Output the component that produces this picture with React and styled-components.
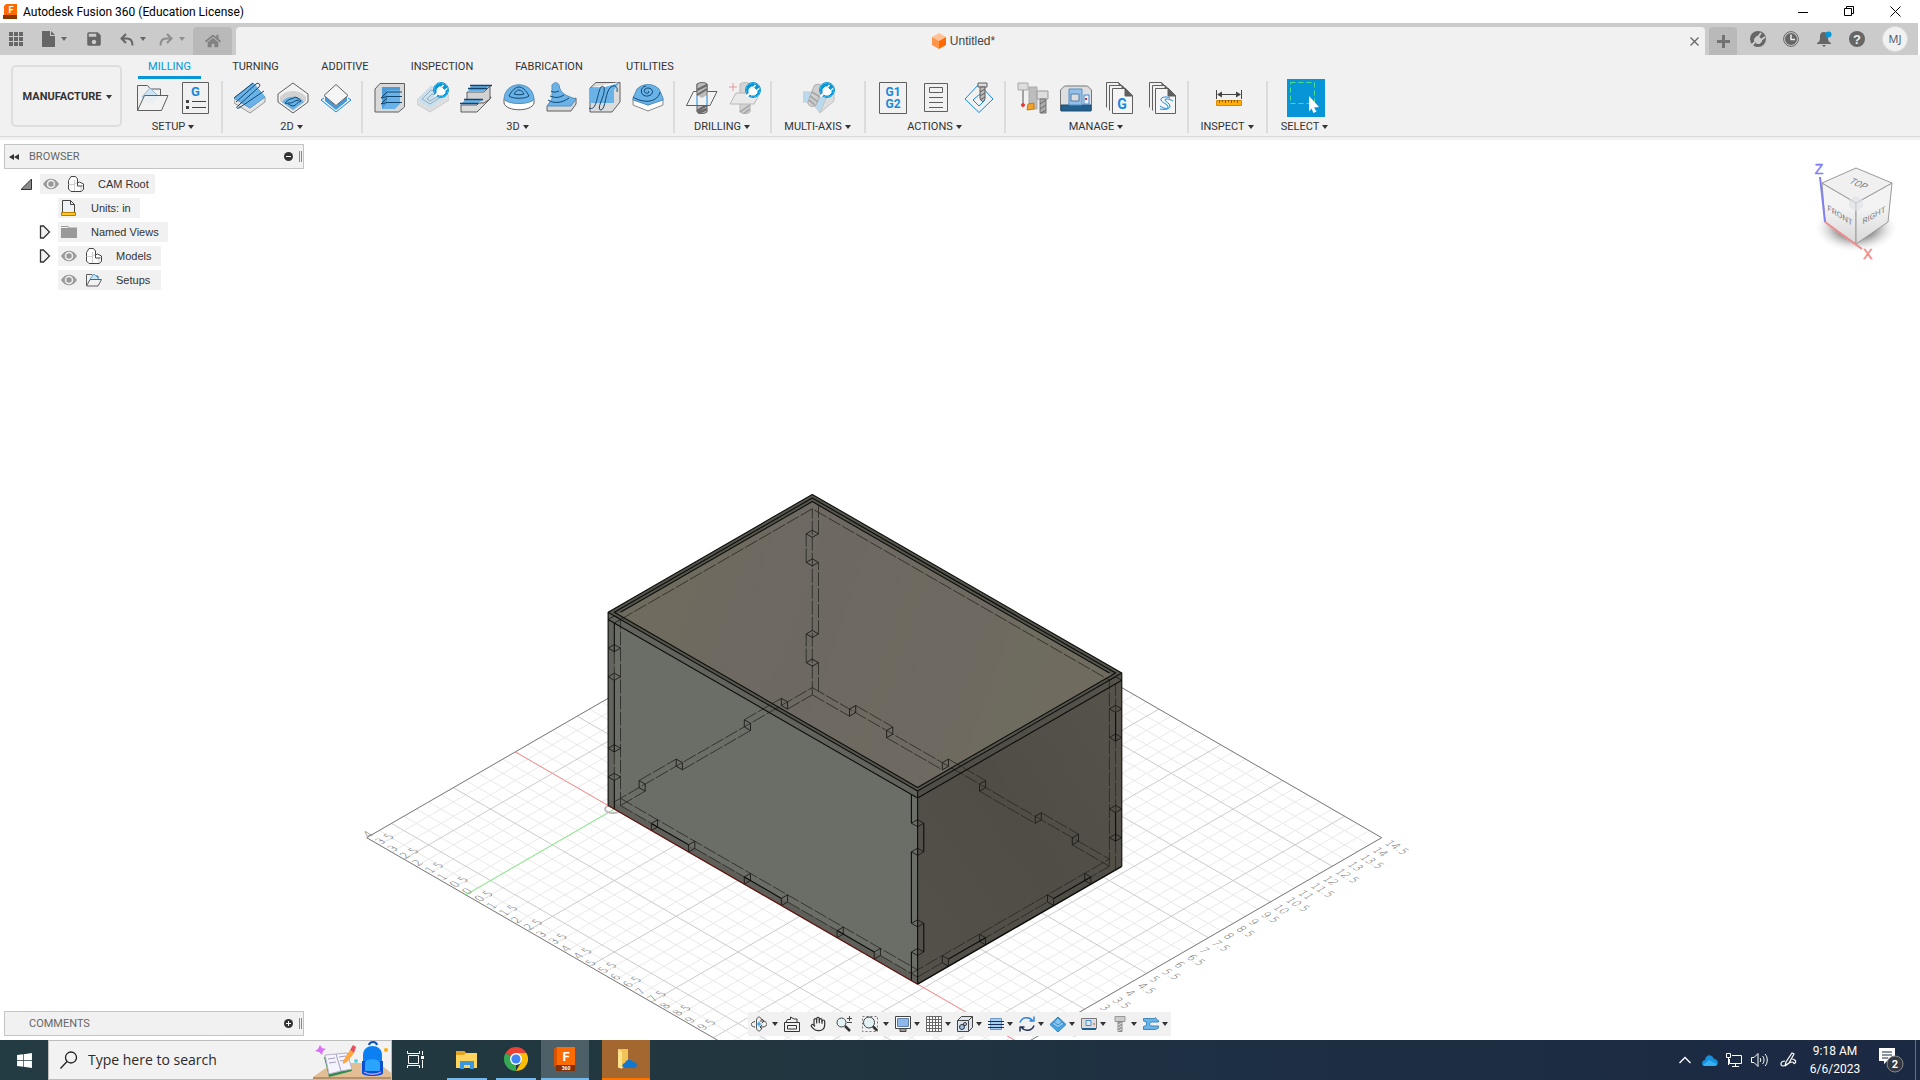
import React from 'react';
import styled, { createGlobalStyle } from 'styled-components';
import { FaHome, FaWindows } from 'react-icons/fa';
import { MdSave } from 'react-icons/md';
import { Hand } from 'lucide-react';

const GlobalStyle = createGlobalStyle`
  * { box-sizing: border-box; }
  body {
    margin: 0;
    font-family: 'Liberation Sans', Arial, sans-serif;
    font-size: 11px;
    color: #333;
    background: #fff;
    overflow: hidden;
  }
  button {
    font: inherit;
    color: inherit;
    background: none;
    border: 0;
    padding: 0;
  }
  svg { display: block; flex: none; }
`

//Shell
const Page = styled.div`
  display: flex;
  flex-direction: column;
  min-height: 100vh;
`

const TitleBar = styled.header`
  display: flex;
  align-items: center;
  height: 23px;
  padding: 0 2px 0 3px;
`

const Title = styled.h1`
  flex: 1;
  margin: 0 0 0 5px;
  font: 400 12px/20px Roboto, 'Open Sans', sans-serif;
  color: #000;
`

const WindowButton = styled.button`
  display: grid;
  place-items: center;
  width: 46px;
  height: 20px;
`

//Tab strip
const TabStrip = styled.div`
  display: flex;
  align-items: stretch;
  height: 32px;
  padding-top: 4px;
  margin-right: 2px;
  background: #cbcbcb;
  color: #666;
`

const QuickTools = styled.div`
  display: flex;
  align-items: center;
  width: 193px;
  padding: 0 0 4px 9px;
`

const QuickButton = styled.button`
  display: flex;
  align-items: center;
  justify-content: flex-start;
  gap: 6px;
  width: ${props => props.$width}px;
  opacity: ${props => props.$dim ? 0.6 : 1};
`

const HomeTab = styled.button`
  display: grid;
  place-items: center;
  width: 39px;
  margin-right: 4px;
  border-radius: 4px 4px 0 0;
  background: #b9b9b9;
  color: #828282;
`

const DocumentTab = styled.div`
  flex: 1;
  display: flex;
  align-items: center;
  border-radius: 4px 4px 0 0;
  background: #f1f1f1;
`

const DocumentName = styled.span`
  flex: 1;
  display: flex;
  align-items: center;
  justify-content: center;
  gap: 4px;
  padding-left: 8px;
  font-size: 12px;
  color: #444;
`

const CloseTab = styled.button`
  display: grid;
  place-items: center;
  width: 22px;
  height: 28px;
`

const NewTab = styled(HomeTab)`
  width: 28px;
  margin: 0 4px;
`

const AccountTools = styled.div`
  display: flex;
  align-items: center;
  padding-bottom: 4px;
`

const AccountButton = styled.button`
  display: grid;
  place-items: center;
  width: 33px;
  height: 28px;
`

const Avatar = styled.button`
  width: 26px;
  height: 26px;
  margin: 0 10px 0 9px;
  border: 1px solid #dcdcdc;
  border-radius: 50%;
  background: #f1f1f1;
  font: 400 11px/22px 'Open Sans', sans-serif;
  color: #45526b;
`

//Ribbon
const Ribbon = styled.section`
  display: flex;
  height: 85px;
  background: #f1f1f1;
  border-bottom: 3px solid #f1f1f1;
  box-shadow: inset 0 -1px #d9d9d9;
`

const WorkspaceButton = styled.button`
  display: flex;
  align-items: center;
  justify-content: center;
  gap: 5px;
  width: 111px;
  height: 62px;
  margin: 10px 4px 0 11px;
  padding: 2px 0 0 2px;
  border: 2px solid #dedede;
  border-radius: 5px;
  font: 700 11px/14px Roboto, sans-serif;
`

const RibbonMain = styled.div`
  font: 400 11px/14px Roboto, sans-serif;
`

const RibbonTabs = styled.nav`
  display: flex;
  height: 25px;
  padding-left: 12px;
`

const RibbonTab = styled.button`
  width: ${props => props.$width}px;
  height: 24px;
  margin-right: 20px;
  padding-top: 2px;
  border-bottom: 3px solid ${props => props.$active ? '#0696d7' : 'transparent'};
  color: ${props => props.$active ? '#0696d7' : '#333'};
`

const Groups = styled.div`
  display: flex;
`

const Group = styled.div`
  display: flex;
  flex-direction: column;
  align-items: center;
  width: ${props => props.$width}px;
  height: 52px;
  margin-top: 1px;
  border-right: 2px solid #dcdcdc;
  &:last-child { border-color: transparent; }
`

const GroupIcons = styled.div`
  flex: none;
  display: flex;
  height: 34px;
  padding-left: 2px;
  align-items: center;
`

const ToolButton = styled.button`
  display: grid;
  place-items: center;
  width: 43px;
  height: 34px;
`

const SelectTool = styled(ToolButton)`
  width: 38px;
  height: 38px;
`

const SelectFill = styled.span`
  display: grid;
  place-items: center;
  width: 38px;
  height: 38px;
  background: #0696d7;
`

const GroupLabel = styled.button`
  flex: none;
  display: flex;
  align-items: center;
  gap: 3px;
  height: 14px;
  margin: 5px 1px 0 0;
  white-space: nowrap;
`

const Caret = styled.span`
  flex: none;
  margin-left: ${props => props.$gap || 0}px;
  border: 3px solid transparent;
  border-top: 4px solid ${props => props.$color || '#333'};
  border-bottom: 0;
`

//Viewport, every overlay shares one grid cell with the scene
const Viewport = styled.main`
  flex: 1;
  display: grid;
  grid-template: minmax(0, 1fr) / minmax(0, 1fr);
  overflow: hidden;
  & > * { grid-area: 1 / 1; }
`

const Scene = styled.svg`
  width: 100%;
  height: 0;
  min-height: 100%;
`

const Side = styled.aside`
  display: flex;
  flex-direction: column;
  justify-content: space-between;
  justify-self: start;
  width: 300px;
  margin: 4px 0 4px 4px;
`

const PanelBar = styled.div`
  display: flex;
  align-items: center;
  height: 25px;
  padding: 0 1px 0 4px;
  border: 1px solid #c4c4c4;
  background: #f1f1f1;
  font: 400 11px/14px Roboto, sans-serif;
  color: #666;
`

const PanelTitle = styled.span`
  flex: 1;
  padding-left: 4px;
`

const PanelIcon = styled.button`
  display: grid;
  place-items: center;
  width: 10px;
  height: 20px;
  margin-right: 6px;
`

const Grip = styled.span`
  width: 3px;
  height: 11px;
  border: solid #888;
  border-width: 0 1px;
`

const Tree = styled.ul`
  list-style: none;
  margin: 3px 0 0;
  padding: 0;
`

const TreeRow = styled.li`
  display: flex;
  align-items: center;
  height: 24px;
  padding-left: ${props => props.$indent}px;
`

const Toggle = styled.button`
  display: flex;
  width: 19px;
`

const NodePill = styled.span`
  display: flex;
  align-items: center;
  gap: 9px;
  width: ${props => props.$width}px;
  height: 20px;
  padding-left: 3px;
  background: #f1f1f1;
`

const NodeLabel = styled.span`
  padding-left: 5px;
  white-space: nowrap;
`

const CubeSvg = styled.svg`
  justify-self: end;
  width: 110px;
  height: 120px;
  margin: 12px 10px 0 0;
`

const NavBar = styled.div`
  align-self: end;
  justify-self: center;
  display: flex;
  align-items: center;
  height: 24px;
  margin: 0 2px 4px 0;
  background: #f1f1f1;
`

const NavButton = styled.button`
  display: flex;
  align-items: center;
  width: ${props => props.$width}px;
  height: 24px;
`

const NavIcon = styled.span`
  display: grid;
  place-items: center;
  width: 22px;
`

//Windows taskbar
const Taskbar = styled.footer`
  display: flex;
  height: 40px;
  background: linear-gradient(90deg, #233b42, #21363f 40%, #1e3042 60%, #1b2942);
  color: #fff;
  font: 400 12px/18px Roboto, 'Open Sans', sans-serif;
`

const StartButton = styled.button`
  display: grid;
  place-items: center;
  width: 48px;
`

const SearchBox = styled.label`
  display: flex;
  align-items: center;
  width: 344px;
  padding-left: 11px;
  background: #f2f2f2;
  border: 1px solid #bdbdbd;
`

const SearchInput = styled.input`
  flex: 1;
  min-width: 0;
  margin-left: 10px;
  padding: 0;
  border: 0;
  background: none;
  font: 400 14px/20px 'Open Sans', sans-serif;
  &::placeholder { color: #2b2b2b; opacity: 1; }
`

const TaskButton = styled.button`
  display: grid;
  place-items: center;
  width: ${props => props.$width}px;
  margin-right: ${props => props.$gap || 0}px;
  background: ${props => props.$fill || 'transparent'};
  border-bottom: 2px solid ${props => props.$line || 'transparent'};
`

const Tray = styled.div`
  display: flex;
  align-items: center;
  margin-left: auto;
`

const TrayButton = styled.button`
  display: grid;
  place-items: center;
  width: ${props => props.$width || 25}px;
  height: 40px;
`

const Clock = styled.time`
  width: 62px;
  text-align: center;
`

const ShowDesktop = styled.button`
  width: 5px;
  height: 40px;
  border-left: 1px solid #66707f;
`

//Shared icon wrapper
const Icon = ({ size = 32, children }) =>
  <svg width={size} height={size} viewBox={`0 0 ${size} ${size}`} fill="none" stroke="#5f5f5f" strokeLinejoin="round" aria-hidden="true">
    {children}
  </svg>

const BLUE = '#6ab3e8';
const NAVY = '#10466f';

//White plug on a blue disc, marks extension tools
const Plug = () => (
  <g>
    <circle cx="24" cy="8" r="7.500" fill="#fff" stroke="#0696d7" />
    <circle cx="24" cy="8" r="7" fill="#0696d7" stroke="none" />
    <path d="M17.500 14.500l3-3" stroke="#fff" strokeWidth="2" />
    <path d="M20 7.500l2-2.500h2l4 4v2l-2.500 2h-3.500l-2-2z" fill="#fff" stroke="#fff" />
    <path d="M24 6l2.500-3M27 9l3-2.500" stroke="#fff" strokeWidth="1.500" />
  </g>
)

const FolderDiamond = () => (
  <Icon>
    <path d="M.5 28.500V3.500h10l3 3.500h10v7" />
    <path d="M4.500 16L13 6l8.500 9.500v1L13 22z" fill="#cfe5f3" stroke="none" />
    <path d="M5 15l8-9 8 8" stroke="#91b6cc" />
    <path d="M.5 28.500l7-15h23.500l-6.500 15z" fill="#f1f1f1" fillOpacity=".75" />
  </Icon>
)

const SetupSheet = () => (
  <Icon>
    <path d="M2.500.5h26v31h-26z" />
    <text x="15.500" y="14" textAnchor="middle" fontSize="13" fontWeight="700" fontFamily="Roboto, sans-serif" fill="#1489dd" stroke="none">G</text>
    <path d="M6 18h3v3H6zM6 24h3v3H6z" fill="#444" stroke="none" />
    <path d="M12 19.500h14M12 25.500h14" stroke="#444" />
  </Icon>
)

const FaceMill = () => (
  <Icon>
    <path d="M0 16v5l16 10 15-11v-5L16 26z" fill="#e4e4e4" stroke="#999" />
    <path d="M0 16L19 1l12 14-15 11z" fill={BLUE} stroke="#5aa0d4" />
    <path d="M0 16L19 1M2 20L22 2c3-2 5 1 3 3L5 23c-3 2-3 4 0 3L30 9" stroke={NAVY} />
  </Icon>
)

const Pocket2D = () => (
  <Icon>
    <path d="M16 1l15 11v8L16 31 1 20v-8z" fill="#f3f3f3" />
    <path d="M3 15c6-8 20-8 26 0v4L16 29 3 19z" fill="#d2d2d2" stroke="none" />
    <path d="M5 20c5-7 17-7 22 0L16 28z" fill={BLUE} stroke="none" />
    <path d="M8 21c6-6 7-3 10-6 3 1 5 2 6 4-4 1-5 5-8 5s-4-3-8-3zM11 21c5 1 6-3 11-3" stroke={NAVY} />
  </Icon>
)

const Contour2D = () => (
  <Icon>
    <path d="M4 16l-3 2 15 12 15-12-3-2" stroke="#1489dd" />
    <path d="M5 14v5l11 9 11-9v-5L16 24z" fill="#4698d6" stroke="none" />
    <path d="M16 2.500l12 11-12 10-12-10z" fill="#f5f5f5" />
  </Icon>
)

const Adaptive = () => (
  <Icon>
    <path d="M1 7l5-5.500h24.500V25l-6 5H1z" fill="#d9d9d9" />
    <path d="M8 5h18v17l-5 5H8z" fill={BLUE} stroke="none" />
    <path d="M8 5h18v3H13v13l-5 6z" fill="#4c9bd6" stroke="none" />
    <path d="M13 10H28M13 10l-6 6 6-1.500H28M13 16l-6 6 6-1.500H28" stroke={NAVY} />
  </Icon>
)

const PocketGhost = () => (
  <Icon>
    <path d="M0 18L14 4l18 9v5L13 30 0 22z" fill="#dedede" stroke="#ccc" />
    <path d="M0 18L14 4l18 9-19 13z" fill="#c9e0ef" stroke="none" />
    <path d="M5 17l9-9 13 5-14 9zM10 17l5-5 6 2-8 5z" stroke="#93adbd" />
    <Plug />
  </Icon>
)

const Steps = () => (
  <Icon>
    <path d="M1 23h16l8-8h6l-1 2-13 13H1z" fill="#dcdcdc" />
    <path d="M7 10h17l6-6v13l-6 4H7z" fill="#d2d2d2" />
    <path d="M8 9l4-6h18l-6 6zM1 22l5-5h17l-6 5z" fill={BLUE} stroke="none" />
    <path d="M10 3.500h22M8 6.500h19M4 17.500h19M0 21.500h18" stroke={NAVY} strokeWidth="1.500" />
  </Icon>
)

const Dome = () => (
  <Icon>
    <path d="M1 17v4c2 9 28 9 30 0v-4z" fill="#fff" />
    <path d="M1 17C2-2 30-2 31 17c-3 6-27 6-30 0z" fill={BLUE} stroke="#5590ba" />
    <path d="M6 14c3-6 7-9 10-9s7 3 10 9c-4 3-16 3-20 0zM11 12c2-3 3-4 5-4s4 2 5 4c-2 1-8 1-10 0z" stroke={NAVY} />
  </Icon>
)

const Spire = () => (
  <Icon>
    <path d="M1 24l5-5 10 3 14-6v6l-5 7H1z" fill="#d8d8d8" />
    <path d="M6 3c2-3 6-3 7 0 1 9 8 11 17 14l-5 7H1l5-7z" fill={BLUE} stroke="#5590ba" />
    <path d="M5 9c3 2 5 1 8 0M4 14c5 2 9 2 14-1M2 18c6 4 14 3 21-2" stroke={NAVY} />
  </Icon>
)

const Scallop = () => (
  <Icon>
    <path d="M1 6l6-5.500h24V20l-8 10H1z" fill="#dcdcdc" />
    <path d="M1 6h22l7-6" fill="#fff" />
    <path d="M1 6h11l18-5-5 7v13H1z" fill={BLUE} stroke="none" />
    <path d="M0 26c8 4 8-15 12-21 4-3 4 4 2 9-2 6-6 14-2 14 5-1 4-19 10-23 4-3 7 0 6 5" stroke={NAVY} />
  </Icon>
)

const Spiral = () => (
  <Icon>
    <path d="M1 17v6l15 6 15-6v-6l-15 6z" fill="#fff" stroke="#888" />
    <path d="M1 16L5 7c6-6 16-6 22 0l4 9v2l-15 5-15-5z" fill={BLUE} stroke="#5590ba" />
    <path d="M16 9c2 1 0 3-2 2-3-1-2-5 2-5 6 0 6 7 0 8-8 1-9-9-2-10M1 15c4 3 12 5 17 4s9-4 10-9" stroke={NAVY} />
  </Icon>
)

const Drill = () => (
  <Icon>
    <path d="M11 2c3-2 8-2 10 0v28c-2 2-8 2-10 0z" fill="#bcbcbc" />
    <path d="M11 29l10-6M12 31l9-4" stroke="#6a6a6a" strokeWidth="2.500" />
    <path d="M7.500 9.500H31l-7 14H.5z" fill="#f3f3f3" />
    <path d="M11 3h10v10l-5 3-5-3z" fill="#bbb" stroke="none" />
    <path d="M11 8l10-5M11 13l10-6" stroke="#6a6a6a" strokeWidth="2" />
    <path d="M11 2v12M21 2v12" stroke="#6a6a6a" />
    <path d="M11 14v9M21 14v9" stroke="#1489dd" />
  </Icon>
)

const DrillGhost = () => (
  <Icon>
    <path d="M11 2c3-2 8-2 10 0v28c-2 2-8 2-10 0z" fill="#d4d4d4" stroke="#b8b8b8" />
    <path d="M11 30l10-7M14 32l7-5" stroke="#aaa" strokeWidth="2" />
    <path d="M7 11h24l-6 11H1z" fill="#e9e9e9" stroke="#b8b8b8" />
    <path d="M4 1v8M0 5h8" stroke="#e79a9a" />
    <Plug />
  </Icon>
)

const MultiAxis = () => (
  <Icon>
    <path d="M0 10h10v10H0zM17 31L9 21 28 9l3 8z" fill="#b9d9ee" stroke="#c5cdd2" />
    <path d="M24 14l7-3v8L17 31z" fill="#ddd" stroke="#c4c4c4" />
    <path d="M11 4c2-3 8-2 9 2l-7 17c-3 3-9 1-8-3z" fill="#d0d0d0" stroke="#adadad" />
    <path d="M7 14l8 6M9 10l8 5M6 18l6 5" stroke="#a8a8a8" strokeWidth="2" />
    <Plug />
  </Icon>
)

const GCode = () => (
  <Icon>
    <path d="M2.500.5h27v31h-27z" />
    <g stroke="none" fill="#1489dd" fontSize="12" fontWeight="700" fontFamily="Roboto, sans-serif" textAnchor="middle">
      <text x="16" y="14">G1</text>
      <text x="16" y="26">G2</text>
    </g>
  </Icon>
)

const SetupReport = () => (
  <Icon>
    <path d="M4.500 1.500h23v28h-23zM9.500 5.500h13v5h-13zM9 15.500h14M9 20.500h14M9 25.500h14" />
  </Icon>
)

const Simulate = () => (
  <Icon>
    <path d="M16 2l14 15-14 13.500L2 17zM17 12l-7 6 6 6 6-6" stroke="#1489dd" />
    <path d="M15 1h9v4h-9z" fill="#ddd" />
    <path d="M17 5h5v12l-2 3-3-3z" fill="#bbb" />
    <path d="M17 10l5-3M17 14l5-3M17 18l5-3" />
  </Icon>
)

const ToolLibrary = () => (
  <Icon>
    <path d="M1 1h10v7H1z" fill="#ddd" stroke="#aaa" />
    <path d="M6 8v14" stroke="#888" strokeWidth="1.500" />
    <circle cx="6" cy="23" r="1.500" fill="#e33" stroke="#e33" />
    <path d="M12 5h8v22h-8z" fill="#bdbdbd" stroke="#aaa" />
    <path d="M11 22l6-1v6l-7 1z" fill="#f2a32b" stroke="#c77d0b" />
    <path d="M20 9h11v8H20z" fill="#ddd" stroke="#999" />
    <path d="M23 17h6v14h-6z" fill="#aaa" stroke="#777" />
    <path d="M23 22l6-4M23 27l6-4M24 31l5-3" stroke="#666" />
  </Icon>
)

const Machine = () => (
  <Icon>
    <path d="M.5 28.500V8l4-4h23l4 4v20.500z" fill="#dedede" stroke="#777" />
    <path d="M1 23h30v6H1z" fill="#23608e" stroke="#1c5079" />
    <path d="M9 7h13v16H9z" fill="#93bfe8" stroke="#5590c8" />
    <path d="M11 12h8v7h-8z" fill="#ddd" stroke="#4f7faa" />
    <path d="M24 13h5v9h-5z" fill="#e8f1fb" stroke="#3c88cf" />
    <path d="M26 16v2" stroke="#d33" strokeWidth="2" />
  </Icon>
)

const Stack = ({ children }) => (
  <Icon>
    <path d="M3.500 25.500v-25h12l3 3M6.500 28.500v-25h12l3 3" />
    <path d="M9.500 6.500h13l7 7v18h-20z" fill="#f5f5f5" />
    <path d="M15.500.5l3 3h-2zM19 3.500l3 3h-3zM22 6v8h7.500z" fill="#5f5f5f" />
    {children}
  </Icon>
)

const PostLibrary = () => (
  <Stack>
    <text x="19" y="27" textAnchor="middle" fontSize="14" fontWeight="700" fontFamily="Roboto, sans-serif" fill="#1489dd" stroke="none">G</text>
  </Stack>
)

const TemplateLibrary = () => (
  <Stack>
    <path d="M24 16c-3-2-10-1-9 2s7 4 7 7-5 1-8-1M27 19c-3-2-8-3-8-1s5 3 5 6-4 4-10 3" stroke="#1489dd" />
  </Stack>
)

const Measure = () => (
  <Icon>
    <path d="M3.500 8v9M28.500 8v9M5 12.500h22" stroke="#444" />
    <path d="M4 12.500l5-3v6zM28 12.500l-5-3v6z" fill="#444" stroke="none" />
    <path d="M3.500 18.500h25v5h-25z" fill="#ffac0a" stroke="#d58b00" />
    <path d="M6.500 18v3M9.500 18v2M12.500 18v3M15.500 18v2M18.500 18v3M21.500 18v2M24.500 18v3" stroke="#8a5a00" />
  </Icon>
)

const SelectArrow = () => (
  <SelectFill>
    <Icon>
      <path d="M.5.5h24v21H.5z" stroke="#4fe08c" strokeDasharray="5 3" />
      <path d="M19 14l10 11-5 .5 2.500 4-3 1.500-2-4.500-2.500 3z" fill="#fff" stroke="none" />
    </Icon>
  </SelectFill>
)

const ribbonTabs = [
  { label: 'MILLING', width: 63, active: true },
  { label: 'TURNING', width: 69 },
  { label: 'ADDITIVE', width: 70 },
  { label: 'INSPECTION', width: 84 },
  { label: 'FABRICATION', width: 90 },
  { label: 'UTILITIES', width: 72 },
];

const groups = [
  { label: 'SETUP', width: 97, icons: [FolderDiamond, SetupSheet] },
  { label: '2D', width: 140, icons: [FaceMill, Pocket2D, Contour2D] },
  { label: '3D', width: 312, icons: [Adaptive, PocketGhost, Steps, Dome, Spire, Scallop, Spiral] },
  { label: 'DRILLING', width: 97, icons: [Drill, DrillGhost] },
  { label: 'MULTI-AXIS', width: 94, icons: [MultiAxis] },
  { label: 'ACTIONS', width: 140, icons: [GCode, SetupReport, Simulate] },
  { label: 'MANAGE', width: 183, icons: [ToolLibrary, Machine, PostLibrary, TemplateLibrary] },
  { label: 'INSPECT', width: 79, icons: [Measure] },
  { label: 'SELECT', width: 76, icons: [SelectArrow], selected: true },
];

//Browser tree icons
const Eye = () => (
  <Icon size={16}>
    <path d="M0 8c4-7 12-7 16 0-4 7-12 7-16 0z" fill="#999" stroke="none" />
    <circle cx="8" cy="8" r="3.500" fill="#999" stroke="#f1f1f1" strokeWidth="1.500" />
  </Icon>
)

const Component = () => (
  <Icon size={16}>
    <path d="M.5 4.500L3 .5h4.500L9.500 3v4l2-1 4 2v5.500l-2.500 2H3L.5 13z" fill="#fff" stroke="#444" />
    <path d="M.5 8.500h6v6.500M6.500 4v4.500M7 8l2.500-1.500M13 10v5" stroke="#ccc" />
    <path d="M9.500 3v7h5" stroke="#444" />
  </Icon>
)

const Units = () => (
  <Icon size={16}>
    <path d="M1.500 12V.5h8l4 4V12" fill="#eef1f5" stroke="#444" />
    <path d="M9.500.5v4h4" stroke="#444" />
    <path d="M.5 12.500h14v3H.5z" fill="#ffc81f" stroke="#b57e00" />
  </Icon>
)

const FolderSolid = () => (
  <Icon size={16}>
    <path d="M0 2h7l1 1.500h8V14H0z" fill="#999" stroke="none" />
    <path d="M0 3.500h7" stroke="#f1f1f1" />
  </Icon>
)

const FolderSetup = () => (
  <Icon size={16}>
    <path d="M.5 14V2.500H6L7 4h5v3" />
    <path d="M4 7l4-5 5 5" fill="#cfe5f3" stroke="#5d9fcb" />
    <path d="M.5 14L4 7.500h11.500L12 14z" fill="#f1f1f1" />
  </Icon>
)

const treeNodes = [
  { label: 'CAM Root', indent: 17, width: 115, icons: [Eye, Component], toggle: 'open' },
  { label: 'Units: in', indent: 35, width: 82, icons: [Units] },
  { label: 'Named Views', indent: 35, width: 110, icons: [FolderSolid], toggle: 'closed' },
  { label: 'Models', indent: 35, width: 103, icons: [Eye, Component], toggle: 'closed' },
  { label: 'Setups', indent: 35, width: 103, icons: [Eye, FolderSetup] },
];

const ToggleIcon = ({ kind }) => (
  <svg width="14" height="14" viewBox="0 0 14 14" aria-hidden="true">
    {kind === 'open'
      ? <path d="M0 12.500h10.500V2z" fill="#8a8a8a" stroke="#333" />
      : <path d="M1.500 1v12h3l6-6-6-6z" fill="#f2f2f2" stroke="#333" strokeWidth="1.300" />}
  </svg>
)

//Scene projection, isometric with z up
const ORIGIN = [614.3, 809.1];
const ISO_X = 24.756;
const ISO_Y = 14.29;
const ISO_Z = 28.62;

const project = (x, y, z = 0) => [
  ORIGIN[0] + (x + y) * ISO_X,
  ORIGIN[1] + (x - y) * ISO_Y - z * ISO_Z,
];

const toPath = (points, close) =>
  'M' + points.map((p) => project(...p).map((n) => n.toFixed(1)).join(' ')).join('L') + (close ? 'Z' : '');

const GRID = { x0: -4, x1: 16.5, y0: -6, y1: 14.5 };
const steps = (from, to, by) => {
  const out = [];
  for (let v = from; v <= to + 0.001; v += by) out.push(v);
  return out;
};

const gridPath = (major) => {
  const keep = (v) => (v % 2.5 === 0) === major;
  return steps(GRID.x0, GRID.x1, 0.5).filter(keep).map((x) => toPath([[x, GRID.y0], [x, GRID.y1]])).join('')
    + steps(GRID.y0, GRID.y1, 0.5).filter(keep).map((y) => toPath([[GRID.x0, y], [GRID.x1, y]])).join('');
};

const place = (p, angle, dx, dy) => {
  const [px, py] = project(...p);
  return `translate(${px + dx} ${py + dy}) rotate(${angle}) skewX(${-angle})`;
};

const GridLabels = () => (
  <g fontFamily="DejaVu Sans, sans-serif" fontWeight="200" fontSize="10" fill="#6a6a6a">
    {steps(-4, 9.5, 0.5).map((x) => (
      <text key={`x${x}`} transform={place([x, GRID.y0], -30, 2, 0)}>{Math.abs(x)}</text>
    ))}
    {steps(1.5, 14.5, 0.5).map((y) => (
      <text key={`y${y}`} transform={place([GRID.x1, y], 30, 2, 6)}>{y}</text>
    ))}
  </g>
)

//Box model, units are inches
const X0 = -0.25, X1 = 12.25, Y0 = 0, Y1 = 8.25, H = 6.75, T = 0.25, LIP = 0.125;
const tabsZ = [[1, 2], [4.5, 5.5]];
const gapsZ = [[0, 1], [2, 4.5], [5.5, 6.5]];
const tabsX = [[1.5, 3], [5.25, 6.75], [9, 10.5]];
const gapsX = [[0, 1.5], [3, 5.25], [6.75, 9], [10.5, 12]];
const tabsY = [[1.25, 2.75], [5.5, 7]];
const gapsY = [[0.25, 1.25], [2.75, 5.5], [7, 8]];

const vertical = (x, y, spans) => spans.map(([a, b]) => toPath([[x, y, a], [x, y, b]])).join('');
const alongX = (y, z, spans) => spans.map(([a, b]) => toPath([[a, y, z], [b, y, z]])).join('');
const alongY = (x, z, spans) => spans.map(([a, b]) => toPath([[x, a, z], [x, b, z]])).join('');
const rhombs = (x, y) => tabsZ.flat().map((z) =>
  toPath([[x, y, z], [x + T, y, z], [x + T, y + T, z], [x, y + T, z]], true)).join('');
const endX = (y) => tabsX.flat().map((x) =>
  toPath([[x, y, 0], [x, y + T, 0], [x, y + T, T], [x, y, T]], true)).join('');
const endY = (x) => tabsY.flat().map((y) =>
  toPath([[x, y, 0], [x + T, y, 0], [x + T, y, T], [x, y, T]], true)).join('');

const solidLines = [
  toPath([[X0, Y0, H], [X1, Y0, H], [X1, Y1, H], [X0, Y1, H]], true),
  toPath([[X0, Y0, 0], [X0, Y0, H]]),
  toPath([[X1, Y0, 0], [X1, Y0, H]]),
  toPath([[X1, Y1, 0], [X1, Y1, H]]),
  toPath([[X0, Y0, 6.5], [X1, Y0, 6.5], [X1, Y1, 6.5]]),
  toPath([[X0 + LIP, Y0 + LIP, H], [X1 - LIP, Y0 + LIP, H], [X1 - LIP, Y1 - LIP, H], [X0 + LIP, Y1 - LIP, H]], true),
  toPath([[0, 0.25, H], [0, 8, H], [12, 8, H]]),
  vertical(0, 0, gapsZ),
  vertical(12, 0, gapsZ),
  vertical(X1, T, tabsZ),
  vertical(X1, 8, tabsZ),
  alongX(0, T, tabsX),
  alongY(X1, T, tabsY),
].join('');

const thinLines = [
  rhombs(X0, 0), rhombs(12, 0), rhombs(12, 8), rhombs(X0, 8),
  endX(0), endX(8), endY(X0), endY(12),
  toPath([[X0, Y0, 6.5], [X0, T, 6.5], [0, T, 6.5], [0, 0, 6.5]]),
  toPath([[X1, Y1, 6.5], [12, Y1, 6.5], [12, 8, 6.5]]),
].join('');

const hiddenLines = [
  toPath([[0, T, 6.5], [0, 8, 6.5], [12, 8, 6.5]]),
  vertical(0, T, [[0, 6.5]]),
  vertical(0, 0, tabsZ),
  vertical(12, 8, [[0, 6.5]]),
  vertical(X1, 8, gapsZ),
  vertical(0, 8, [[0, 6.5]]),
  vertical(0, Y1, gapsZ),
  vertical(X0, 8, tabsZ),
  alongX(T, T, [[0, 12]]), alongX(T, 0, gapsX),
  alongX(8, T, [[0, 12]]), alongX(8, 0, gapsX), alongX(Y1, T, tabsX),
  alongY(0, T, [[0, 8]]), alongY(0, 0, gapsY), alongY(X0, T, tabsY),
  alongY(12, T, [[0, 8]]), alongY(12, 0, gapsY),
].join('');

const BoxModel = () => (
  <g strokeLinejoin="round">
    <defs>
      <linearGradient id="inside" x1="0" y1="0.3" x2="1" y2="0.5">
        <stop offset="0.1" stopColor="#6f6b5e" />
        <stop offset="0.3" stopColor="#6e6961" />
        <stop offset="0.42" stopColor="#6d6862" />
        <stop offset="0.58" stopColor="#6f6a60" />
        <stop offset="0.68" stopColor="#6e6961" />
        <stop offset="0.9" stopColor="#6f6c5f" />
      </linearGradient>
      <linearGradient id="side" x1="0" y1="1" x2="1" y2="0">
        <stop offset="0" stopColor="#54514a" />
        <stop offset="0.5" stopColor="#504d46" />
        <stop offset="1" stopColor="#56534b" />
      </linearGradient>
    </defs>
    <path d={toPath([[X0, Y0, H], [X1, Y0, H], [X1, Y1, H], [X0, Y1, H]], true)} fill="#55554d" />
    <path d={toPath([[0, LIP, H], [X1 - LIP, LIP, H], [X1 - LIP, 8, H], [0, 8, H]], true)} fill="url(#inside)" />
    <path d={toPath([[X0, Y0, 0], [X1, Y0, 0], [X1, Y0, H], [X0, Y0, H]], true)} fill="#6b6d67" />
    <path d={toPath([[X1, Y0, 0], [X1, Y1, 0], [X1, Y1, H], [X1, Y0, H]], true)} fill="url(#side)" />
    <path d={toPath([[X0, Y0, 6.5], [X1, Y0, 6.5], [X1, Y0, H], [X0, Y0, H]], true)} fill="#62635d" />
    <path d={toPath([[X0, Y0, 0], [0, Y0, 0], [0, Y0, 6.5], [X0, Y0, 6.5]], true)} fill="#62645e" />
    <path d={toPath([[X0, Y0, 0], [X1, Y0, 0], [X1, Y0, T], [X0, Y0, T]], true)} fill="#5f605a" />
    <path d={hiddenLines} fill="none" stroke="#25251f" strokeOpacity="0.8" strokeDasharray="14 2" />
    <path d={thinLines} fill="none" stroke="#1b1b18" strokeOpacity="0.9" />
    <path d={solidLines} fill="none" stroke="#0c0c0a" strokeWidth="1.100" />
    <path d={toPath([[X0, Y0], [X1, Y0]])} stroke="#5e1512" strokeWidth="1.300" />
    <path d={toPath([[X1, Y0], [X1, Y1]])} stroke="#0c0c0a" strokeWidth="1.500" />
  </g>
)

const SceneView = () => (
  <Scene viewBox="0 140 1920 900" preserveAspectRatio="xMidYMid slice" role="img" aria-label="Box on the work plane">
    <path d={gridPath(false)} fill="none" stroke="#e9e9e9" />
    <path d={gridPath(true)} fill="none" stroke="#cbcbcb" />
    <path d={toPath([[GRID.x0, GRID.y0], [GRID.x1, GRID.y0], [GRID.x1, GRID.y1], [GRID.x0, GRID.y1]], true)} fill="none" stroke="#7a7a7a" />
    <path d={toPath([[GRID.x0, 0], [GRID.x1, 0]])} stroke="#ff8f8f" />
    <path d={toPath([[0, GRID.y0], [0, 0]])} stroke="#86f286" />
    <ellipse cx="613" cy="809" rx="8" ry="4" fill="none" stroke="#bdbdbd" strokeWidth="2" />
    <GridLabels />
    <BoxModel />
  </Scene>
)

const ViewCube = () => (
  <CubeSvg viewBox="0 0 110 120" role="img" aria-label="View cube">
    <defs>
      <radialGradient id="cubeShadow">
        <stop offset="0.4" stopColor="#888" />
        <stop offset="1" stopColor="#fff" stopOpacity="0" />
      </radialGradient>
      <linearGradient id="cubeFace" x1="0" y1="0" x2="0" y2="1">
        <stop offset="0.4" stopColor="#f3f3f3" />
        <stop offset="1" stopColor="#d8d8d8" />
      </linearGradient>
    </defs>
    <ellipse cx="56" cy="76" rx="43" ry="25" fill="url(#cubeShadow)" />
    <g stroke="#9a9a9a" strokeLinejoin="round">
      <path d="M22 31L56 51V92L25 70z" fill="url(#cubeFace)" />
      <path d="M92 31L56 51V92L88 70z" fill="url(#cubeFace)" />
      <path d="M56 16L92 31 56 51 22 31z" fill="#f0f0f0" />
    </g>
    <path d="M56 44l7 4v7l-7 4-7-4v-7z" fill="#dfe1e5" fillOpacity="0.7" />
    <path d="M20 25L25 70" stroke="#8080ee" strokeWidth="2" />
    <path d="M25 70L62 97" stroke="#f28c8c" strokeWidth="2" />
    <g fontFamily="Roboto, sans-serif" fontSize="8" fill="#7d8187" textAnchor="middle">
      <text transform="translate(56 34) rotate(24) skewX(-24)" fontSize="9">TOP</text>
      <text transform="translate(40 66) skewY(32)">FRONT</text>
      <text transform="translate(74 66) skewY(-30)">RIGHT</text>
    </g>
    <g fontFamily="Liberation Sans, Arial, sans-serif" fontSize="14" textAnchor="middle">
      <text x="19" y="22" fill="#8080ee" stroke="#8080ee" strokeWidth="0.500">Z</text>
      <text x="68" y="107" fill="#f28c8c" stroke="#f28c8c" strokeWidth="0.500">X</text>
    </g>
  </CubeSvg>
)

//Navigation bar icons
const navItems = [
  { name: 'Orbit', width: 33, wide: true, icon: (
    <Icon size={16}>
      <path d="M5.500 4C6 0 10 0 10.500 4M5.500 12c.5 4 4.500 4 5 0M5.500 4v8" stroke="#555" />
      <path d="M4 5.500c-5 1-5 5 0 5.500M9 5h4c4 2 4 5-1 6H9M11 3l2 2-2 2M11 9l-2 2 2 2" stroke="#444" />
      <path d="M8 5.500v5M5.500 8h5" stroke="#1489dd" />
    </Icon>) },
  { name: 'Look At', width: 26, icon: (
    <Icon size={16}>
      <path d="M.5 6.500h15v9H.5zM3.500 9.500h9v3.500h-9zM2 6L3.500 3.500h3V1L10 3h3v3" stroke="#333" />
    </Icon>) },
  { name: 'Pan', width: 26, icon: <Hand size={16} color="#333" strokeWidth={1.8} aria-hidden="true" /> },
  { name: 'Zoom', width: 26, icon: (
    <Icon size={16}>
      <circle cx="5.500" cy="6.500" r="4.500" fill="#e3f2f4" stroke="#444" />
      <path d="M9 10l5 5" stroke="#333" strokeWidth="2.500" />
      <path d="M13.500 0v5M11 2.500h5M11 6.500h5" stroke="#444" />
    </Icon>) },
  { name: 'Zoom Window', width: 33, wide: true, icon: (
    <Icon size={16}>
      <path d="M.5.5h15v15H.5z" stroke="#777" strokeDasharray="2 2" />
      <circle cx="7" cy="6.500" r="5.500" fill="#e3f2f4" stroke="#444" />
      <path d="M11 10.500l4 4" stroke="#333" strokeWidth="2.500" />
    </Icon>) },
  { name: 'Display Settings', width: 31, caret: true, icon: (
    <Icon size={16}>
      <path d="M.5.5h15v12H.5z" fill="#fff" stroke="#444" />
      <path d="M2.500 2.500h11v8h-11z" fill="#8fb8ea" stroke="#5f81ad" />
      <path d="M5 15.500h6v-3H5z" fill="#999" stroke="#444" />
    </Icon>) },
  { name: 'Grid and Snaps', width: 31, caret: true, icon: (
    <Icon size={16}>
      <path d="M.5.5h15v15H.5zM3.500 0v16M6.500 0v16M9.500 0v16M12.500 0v16M0 3.500h16M0 6.500h16M0 9.500h16M0 12.500h16" stroke="#666" fill="#fff" />
    </Icon>) },
  { name: 'Viewports', width: 31, caret: true, icon: (
    <Icon size={16}>
      <path d="M.5 4.500l4-4h11v11l-4 4H.5z" fill="#dce5ef" stroke="#444" />
      <path d="M.5 4.500h11v11M11.500 4.500l4-4" stroke="#444" />
      <circle cx="5" cy="11" r="2.500" fill="#9fc1e8" stroke="#333" />
      <circle cx="8" cy="8" r="1.500" stroke="#333" />
    </Icon>) },
  { name: 'Toolpaths', width: 31, caret: true, icon: (
    <Icon size={16}>
      <path d="M2.500 2.500h11v11h-11z" fill="#a5cbee" stroke="#6e98c4" />
      <path d="M0 5.500h16M0 8.500h16M0 11.500h16" stroke="#16305c" />
    </Icon>) },
  { name: 'Regenerate', width: 31, caret: true, icon: (
    <Icon size={16}>
      <path d="M1 6.500C3 1 10 0 13.500 4.500M15 .5v4.500h-4.500" stroke="#2f83de" strokeWidth="1.500" />
      <path d="M15 9.500C13 15 6 16 2.500 11.500M1 15.500V11h4.500" stroke="#222f55" strokeWidth="1.500" />
    </Icon>) },
  { name: 'Stock', width: 31, caret: true, icon: (
    <Icon size={16}>
      <path d="M0 8.500L8 1l8 7.500L8 16z" fill="#4ba6e2" stroke="#2f83bd" />
      <path d="M2 8l6-6 6 6-6 4zM4 6l4-4 4 4-4 3z" fill="#86c6ee" stroke="#3f93cd" />
    </Icon>) },
  { name: 'Machine', width: 31, caret: true, icon: (
    <Icon size={16}>
      <path d="M.5 2.500h15v10H.5z" fill="#ddd" stroke="#777" />
      <path d="M5 4.500h5v5H5z" fill="#dce9f8" stroke="#4d8fd0" />
      <path d="M1 13h14" stroke="#1f5f92" strokeWidth="2" />
      <path d="M13 7v2" stroke="#c44" />
    </Icon>) },
  { name: 'Tool', width: 31, caret: true, icon: (
    <Icon size={16}>
      <path d="M3 .5h10v5H3z" fill="#ccc" stroke="#999" />
      <path d="M6 5.500h4v10H6z" fill="#999" stroke="#888" />
      <path d="M6 9l4-2M6 12l4-2M6 15l4-2" stroke="#ddd" />
    </Icon>) },
  { name: 'Fixture', width: 31, caret: true, icon: (
    <Icon size={16}>
      <path d="M.5 2.500h11l1-1 1 2 2 1V6H9C6 6 6 10 9 10h6.500v2l-3 1.500H.5v-3l3-1V6l-3-1z" fill={BLUE} stroke="#3f87bd" />
    </Icon>) },
];

const DropCaret = () => <Caret aria-hidden="true" />

function TopBar() {
  return (
    <>
      <TitleBar>
        <svg width="15" height="17" viewBox="0 0 15 17" aria-hidden="true">
          <path d="M1 3l2-2h11v14l-2 1H1z" fill="#ff6b00" />
          <path d="M0 12h14v4H0z" fill="#8d3700" />
          <text x="8" y="10" textAnchor="middle" fontSize="9" fontWeight="700" fill="#fff" fontFamily="Roboto, sans-serif">F</text>
        </svg>
        <Title>Autodesk Fusion 360 (Education License)</Title>
        <WindowButton aria-label="Minimize"><svg width="10" height="10"><path d="M0 5.500h10" stroke="#000" /></svg></WindowButton>
        <WindowButton aria-label="Restore"><svg width="11" height="11" fill="none" stroke="#000"><path d="M.5 2.500h7v7h-7zM2.500 2V.5h7v7H8" /></svg></WindowButton>
        <WindowButton aria-label="Close"><svg width="11" height="11" stroke="#000"><path d="M.5.5l10 10M10.500.5L.5 10.500" /></svg></WindowButton>
      </TitleBar>
      <TabStrip>
        <QuickTools>
          <QuickButton $width={33} aria-label="Data panel">
            <svg width="15" height="15" fill="#666"><path d="M0 0h4v4H0zM5 0h4v4H5zM10 0h4v4h-4zM0 5h4v4H0zM5 5h4v4H5zM10 5h4v4h-4zM0 10h4v4H0zM5 10h4v4H5zM10 10h4v4h-4z" /></svg>
          </QuickButton>
          <QuickButton $width={43} aria-label="File">
            <svg width="13" height="16" fill="#666"><path d="M0 0h8v5h5v11H0zM9 0l4 4H9z" /></svg>
            <Caret $color="#666" />
          </QuickButton>
          <QuickButton $width={35} aria-label="Save"><MdSave size={18} /></QuickButton>
          <QuickButton $width={39} aria-label="Undo">
            <svg width="14" height="13" fill="none" stroke="#666" strokeWidth="2"><path d="M6 1L1.500 5.500 6 10M2 5.500h5c4 0 5.500 3 5.500 7" /></svg>
            <Caret $color="#666" />
          </QuickButton>
          <QuickButton $width={34} $dim aria-label="Redo">
            <svg width="14" height="13" fill="none" stroke="#666" strokeWidth="2"><path d="M8 1l4.500 4.500L8 10M12 5.500H7c-4 0-5.500 3-5.500 7" /></svg>
            <Caret $color="#666" />
          </QuickButton>
        </QuickTools>
        <HomeTab aria-label="Home"><FaHome size={16} /></HomeTab>
        <DocumentTab>
          <DocumentName>
            <svg width="14" height="16" viewBox="0 0 14 16" aria-hidden="true">
              <path d="M7 0l7 4-7 4-7-4z" fill="#ffc194" />
              <path d="M0 4l7 4v8l-7-4z" fill="#ff9348" />
              <path d="M14 4L7 8v8l7-4z" fill="#ff6a00" />
            </svg>
            Untitled*
          </DocumentName>
          <CloseTab aria-label="Close document">
            <svg width="9" height="9" stroke="#666" strokeWidth="1.300"><path d="M.5.5l8 8M8.500.5l-8 8" /></svg>
          </CloseTab>
        </DocumentTab>
        <NewTab aria-label="New design"><svg width="13" height="13" stroke="#737373" strokeWidth="3"><path d="M6.500 0v13M0 6.500h13" /></svg></NewTab>
        <AccountTools>
          <AccountButton aria-label="Extensions">
            <svg width="16" height="16" viewBox="0 0 16 16"><circle cx="8" cy="8" r="8" fill="#666" /><path d="M4 8l2.500-3h2l3.500 3.500v2L9.500 13H7l-3-3z" fill="#cbcbcb" /><path d="M1 15l4-4M8 6l3-4M11 9l4-3" stroke="#cbcbcb" strokeWidth="2" /></svg>
          </AccountButton>
          <AccountButton aria-label="Job status">
            <svg width="16" height="16" viewBox="0 0 16 16"><circle cx="8" cy="8" r="7.400" fill="none" stroke="#666" /><circle cx="8" cy="8" r="6" fill="#666" /><path d="M8 3.500V8.500h4" fill="none" stroke="#eee" strokeWidth="1.500" /></svg>
          </AccountButton>
          <AccountButton aria-label="Notifications">
            <svg width="16" height="16" viewBox="0 0 16 16"><path d="M8 1c4 0 4 3 4 6s1 4 3 5v1H1v-1c2-1 3-2 3-5s0-6 4-6zM6 14h4l-2 2z" fill="#666" /><circle cx="12.500" cy="3.500" r="3" fill="#0696d7" /></svg>
          </AccountButton>
          <AccountButton aria-label="Help">
            <svg width="16" height="16" viewBox="0 0 16 16"><circle cx="8" cy="8" r="8" fill="#666" /><text x="8" y="12.500" textAnchor="middle" fontSize="13" fontWeight="700" fill="#eee">?</text></svg>
          </AccountButton>
          <Avatar>MJ</Avatar>
        </AccountTools>
      </TabStrip>
    </>
  );
}

function App() {
  return (
    <Page>
      <GlobalStyle />
      <TopBar />
      <Ribbon>
        <WorkspaceButton>MANUFACTURE<DropCaret /></WorkspaceButton>
        <RibbonMain>
          <RibbonTabs>
            {ribbonTabs.map((tab) => (
              <RibbonTab key={tab.label} $width={tab.width} $active={tab.active}>{tab.label}</RibbonTab>
            ))}
          </RibbonTabs>
          <Groups>
            {groups.map((group) => (
              <Group key={group.label} $width={group.width}>
                <GroupIcons>
                  {group.icons.map((Tool, i) => {
                    const Button = group.selected ? SelectTool : ToolButton;
                    return <Button key={i} aria-label={`${group.label} ${i + 1}`}><Tool /></Button>;
                  })}
                </GroupIcons>
                <GroupLabel>{group.label}<DropCaret /></GroupLabel>
              </Group>
            ))}
          </Groups>
        </RibbonMain>
      </Ribbon>

      <Viewport>
        <SceneView />
        <Side>
          <div>
            <PanelBar>
              <PanelIcon aria-label="Collapse browser"><svg width="10" height="6" fill="#333"><path d="M5 0v6L0 3zM10 0v6L5 3z" /></svg></PanelIcon>
              <PanelTitle>BROWSER</PanelTitle>
              <PanelIcon aria-label="Hide"><svg width="9" height="9"><circle cx="4.500" cy="4.500" r="4.500" fill="#333" /><path d="M2 4.500h5" stroke="#fff" /></svg></PanelIcon>
              <Grip />
            </PanelBar>
            <Tree>
              {treeNodes.map((node) => (
                <TreeRow key={node.label} $indent={node.indent}>
                  <Toggle aria-label={`Expand ${node.label}`}>{node.toggle && <ToggleIcon kind={node.toggle} />}</Toggle>
                  <NodePill $width={node.width}>
                    {node.icons.map((NodeIcon, i) => <NodeIcon key={i} />)}
                    <NodeLabel>{node.label}</NodeLabel>
                  </NodePill>
                </TreeRow>
              ))}
            </Tree>
          </div>
          <PanelBar>
            <PanelIcon as="span" />
            <PanelTitle>COMMENTS</PanelTitle>
            <PanelIcon aria-label="Add comment"><svg width="9" height="9"><circle cx="4.500" cy="4.500" r="4.500" fill="#333" /><path d="M2 4.500h5M4.500 2v5" stroke="#fff" /></svg></PanelIcon>
            <Grip />
          </PanelBar>
        </Side>
        <ViewCube />
        <NavBar>
          {navItems.map((item) => (
            <NavButton key={item.name} $width={item.width} aria-label={item.name}>
              <NavIcon>{item.icon}</NavIcon>
              {(item.caret || item.wide) && <Caret $gap={item.wide ? 2 : 0} />}
            </NavButton>
          ))}
        </NavBar>
      </Viewport>

      <Taskbar>
        <StartButton aria-label="Start"><FaWindows size={17} color="#fff" /></StartButton>
        <SearchBox>
          <svg width="18" height="18" viewBox="0 0 18 18" fill="none" stroke="#222" strokeWidth="1.300" aria-hidden="true"><circle cx="11" cy="6.500" r="5.500" /><path d="M7 10.500L.5 17.500" /></svg>
          <SearchInput aria-label="Search" placeholder="Type here to search" />
          <svg width="78" height="38" viewBox="0 0 78 38" aria-hidden="true">
            <path d="M0 36L20 22h46l12 10v6H0z" fill="#e3bd93" />
            <path d="M0 36h78v2H0z" fill="#b98f67" />
            <path d="M11 16l24-4 4 18-23 6z" fill="#2f8d4b" />
            <path d="M12 14l11-1 11-1 5 16-11 2-12 3z" fill="#f5f3fb" stroke="#b9b3cc" />
            <path d="M23 13l5 17M15 18l7-1M16 22l7-1M26 16l7-1M27 20l7-1" stroke="#a6a0c0" />
            <path d="M30 20l7-11 4 3-7 9-4 2z" fill="#ffa63d" />
            <path d="M37 9l3-5 3 2-2 6z" fill="#e8505b" />
            <path d="M7 4l2 3 4 1-3 2-1 4-3-3-4-1 3-2z" fill="#d873f5" />
            <path d="M50 14c0-12 19-12 19 0v17c0 5-19 5-19 0z" fill="#0c7ff2" />
            <path d="M56 4c1-4 7-4 8 0" fill="none" stroke="#094fb4" strokeWidth="2" />
            <path d="M49 20h21v12c0 4-21 4-21 0z" fill="#0a4fd0" />
            <path d="M52 22c0-5 15-5 15 0v8H52z" fill="#2ba4ff" />
            <path d="M51 31c4 3 13 3 17 0" fill="none" stroke="#b79cff" strokeWidth="1.500" />
            <circle cx="43" cy="20" r="2" fill="#5cd3e0" />
            <circle cx="73" cy="9" r="2" fill="#ffab00" />
          </svg>
        </SearchBox>
        <TaskButton $width={48} $gap={7} aria-label="Task View">
          <svg width="18" height="17" fill="none" stroke="#fff"><path d="M1.500 4.500h10v8h-10zM.5 0v2.500h12V0M.5 17v-2.500h12V17M15.500 0v4M15.500 9v8" /><path d="M14 5h3v3h-3z" fill="#fff" stroke="none" /></svg>
        </TaskButton>
        <TaskButton $width={40} $gap={9} $line="#76b9ed" aria-label="File Explorer">
          <svg width="22" height="19" viewBox="0 0 22 19"><path d="M0 1h8l2 2h11v15H0z" fill="#ffd45e" /><path d="M0 1h8l2 2-2 2H0z" fill="#e5a420" /><path d="M4 19v-8h14v8h-4v-4H8v4z" fill="#3a96dd" /></svg>
        </TaskButton>
        <TaskButton $width={40} $gap={5} $line="#76b9ed" aria-label="Chrome">
          <svg width="24" height="24" viewBox="0 0 24 24">
            <path d="M12 12L1.600 6A12 12 0 0 1 22.400 6z" fill="#ea4335" />
            <path d="M12 12v12A12 12 0 0 1 1.600 6z" fill="#34a853" />
            <path d="M12 6h10.400A12 12 0 0 1 12 24l5.200-9z" fill="#fbbc05" />
            <circle cx="12" cy="12" r="6" fill="#fff" /><circle cx="12" cy="12" r="4.600" fill="#4285f4" />
          </svg>
        </TaskButton>
        <TaskButton $width={48} $gap={13} $line="#76b9ed" $fill="#4e6067" aria-label="Fusion 360">
          <svg width="22" height="24" viewBox="0 0 22 24"><path d="M0 2l3-2h18v18H0z" fill="#ff6b00" /><path d="M0 2l3-2v17l-3 3z" fill="#d95300" /><path d="M2 18h19v6H2z" fill="#80300a" /><text x="12" y="14" textAnchor="middle" fontSize="13" fontWeight="700" fill="#fff" fontFamily="Roboto, sans-serif">F</text><text x="12" y="23" textAnchor="middle" fontSize="5" fontWeight="700" fill="#fff" fontFamily="Roboto, sans-serif">360</text></svg>
        </TaskButton>
        <TaskButton $width={48} $fill="#a46730" $line="#ff7300" aria-label="Documents">
          <svg width="22" height="20" viewBox="0 0 22 20"><path d="M3 0h10v19H3z" fill="#f0c455" /><path d="M3 0l4 3v17l-4-2z" fill="#ffe28c" /><path d="M10 19c-4 0-3-5 0-5 1-4 7-4 8-1 5 0 5 6 1 6z" fill="#1177d1" /></svg>
        </TaskButton>
        <Tray>
          <TrayButton aria-label="Show hidden icons"><svg width="12" height="8" fill="none" stroke="#fff" strokeWidth="1.300"><path d="M.5 7L6 1.500 11.500 7" /></svg></TrayButton>
          <TrayButton aria-label="OneDrive"><svg width="16" height="11" viewBox="0 0 16 11"><path d="M3 11c-4 0-4-5 0-6C4-1 10-1 12 4c5 0 5 7 1 7z" fill="#1490df" /><path d="M1 10l6-5 8 4-2 2H3z" fill="#35b1f3" /></svg></TrayButton>
          <TrayButton aria-label="Network"><svg width="17" height="14" fill="none" stroke="#fff"><path d="M6 2.500h9.500v8h-12V6M9.500 11v2.500M6 13.500h7M.5.5h4v4h-4zM2.500 5v7" /></svg></TrayButton>
          <TrayButton aria-label="Volume"><svg width="17" height="14" fill="none" stroke="#fff"><path d="M.5 4.500H3l4-4v13l-4-4H.5zM9 5c1 1 1 3 0 4M11.500 3c2 2 2 6 0 8M14 1c3 3 3 9 0 12" /></svg></TrayButton>
          <TrayButton $width={32} aria-label="Pen"><svg width="17" height="16" fill="none" stroke="#fff" strokeWidth="1.200"><path d="M5 14l1-4 6-9 2 1-5 9-4 3M5 9c-5 0-5 5-2 5s6-4 9-4 1 3 3 1-1-4-3-4" /></svg></TrayButton>
          <Clock>9:18 AM<br />6/6/2023</Clock>
          <TrayButton $width={49} aria-label="Notifications">
            <svg width="26" height="26" viewBox="0 0 26 26"><path d="M1 1h16v13h-8l-3 3v-3H1z" fill="#fff" /><path d="M4 5h10M4 8h10M4 11h6" stroke="#1b2942" /><circle cx="17" cy="17" r="8" fill="#333842" stroke="#888" /><text x="17" y="21" textAnchor="middle" fontSize="11" fontWeight="700" fill="#fff">2</text></svg>
          </TrayButton>
          <ShowDesktop aria-label="Show desktop" />
        </Tray>
      </Taskbar>
    </Page>
  );
}
export default App
